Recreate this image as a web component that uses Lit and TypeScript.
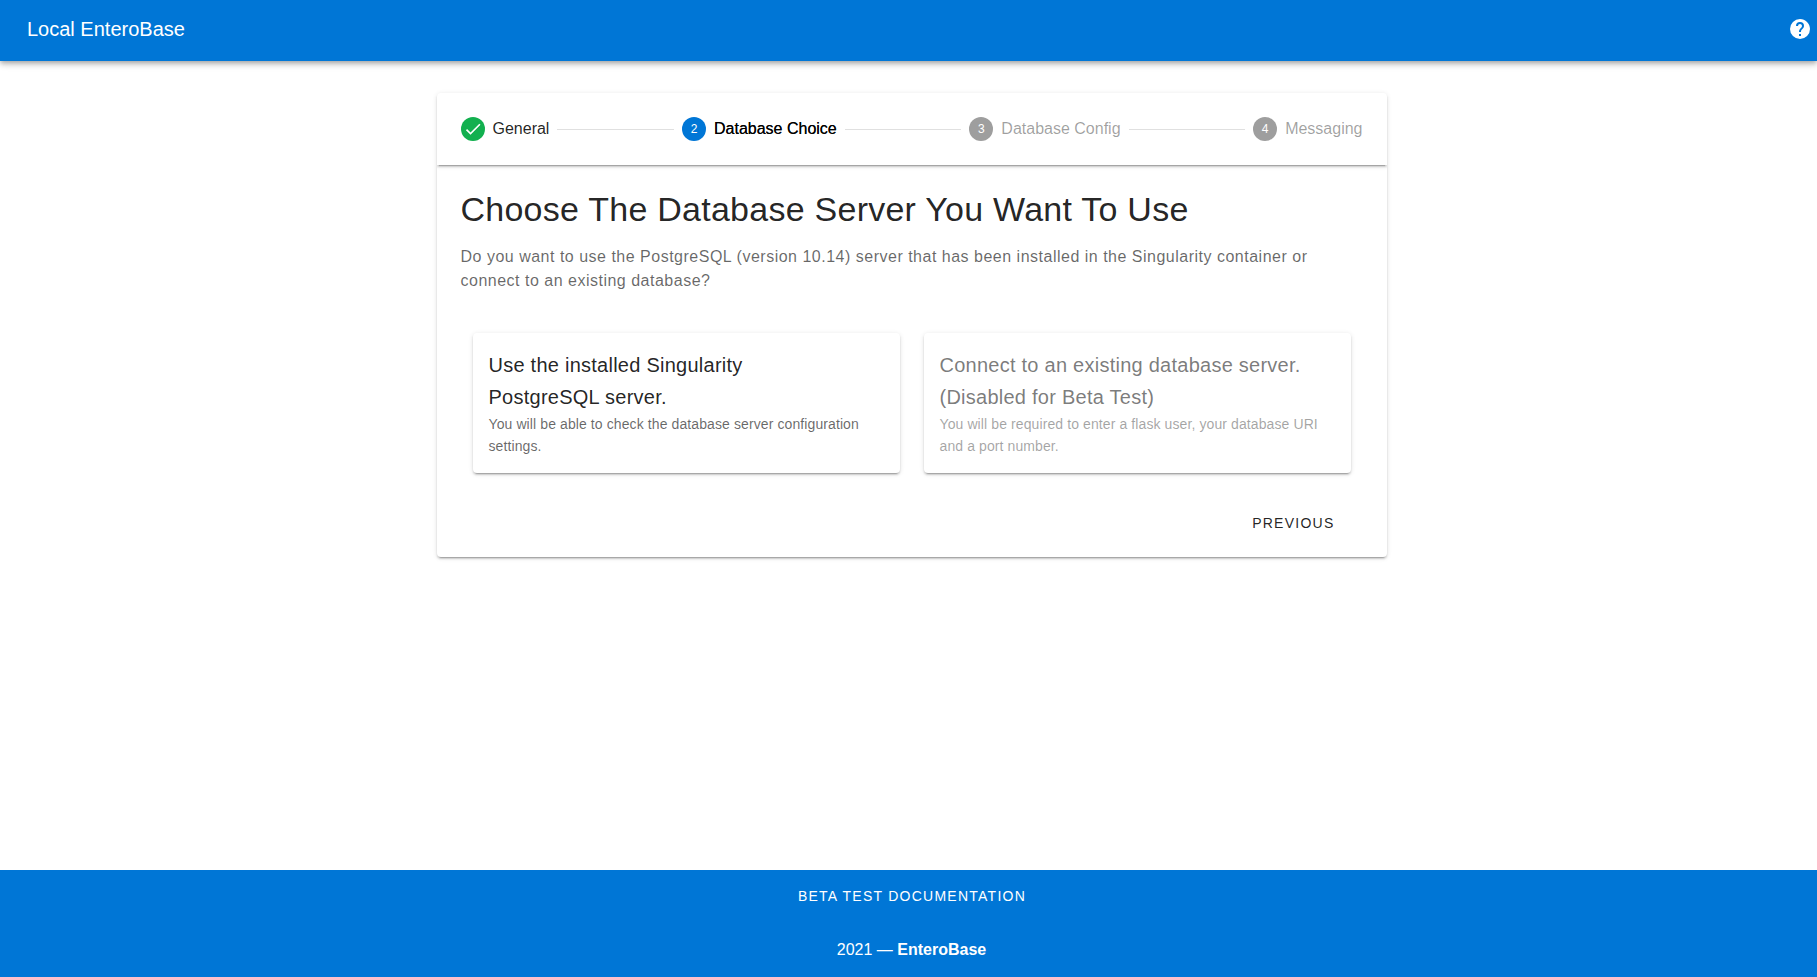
import { LitElement, html, css, svg, nothing } from "lit";
import { customElement } from "lit/decorators.js";
import { classMap } from "lit/directives/class-map.js";

const CHECK = "M21,7L9,19L3.5,13.5L4.91,12.09L9,16.17L19.59,5.59L21,7Z";
const HELP =
  "M15.07,11.25L14.17,12.17C13.45,12.89 13,13.5 13,15H11V14.5C11,13.39 11.45,12.39 12.17,11.67L13.41,10.41C13.78,10.05 14,9.55 14,9C14,7.89 13.1,7 12,7A2,2 0 0,0 10,9H8A4,4 0 0,1 12,5A4,4 0 0,1 16,9C16,9.88 15.64,10.67 15.07,11.25M13,19H11V17H13M12,2A10,10 0 0,0 2,12A10,10 0 0,0 12,22A10,10 0 0,0 22,12C22,6.47 17.5,2 12,2Z";

const STEPS = [
  { label: "General", state: "done" },
  { label: "Database Choice", state: "active" },
  { label: "Database Config", state: "todo" },
  { label: "Messaging", state: "todo" },
];

@customElement("app-root")
export class AppRoot extends LitElement {
  static styles = css`
    :host {
      display: flex;
      flex-direction: column;
      height: 100vh;
      overflow: hidden;
      background: #fff;
      color: rgba(0, 0, 0, 0.87);
      font-family: "Liberation Sans", Arial, sans-serif;
      font-size: 16px;
      line-height: 24px;
    }
    * {
      box-sizing: border-box;
    }
    .bar {
      flex: none;
      height: 61px;
      padding: 0 5px 3px 27px;
      display: flex;
      align-items: center;
      justify-content: space-between;
      background: #0076d6;
      color: #fff;
      box-shadow: 0 2px 4px -1px rgba(0, 0, 0, 0.2), 0 4px 5px 0 rgba(0, 0, 0, 0.14),
        0 1px 10px 0 rgba(0, 0, 0, 0.12);
    }
    .brand {
      font-size: 20px;
      line-height: 30px;
    }
    .help {
      width: 24px;
      height: 24px;
      fill: currentColor;
    }
    main {
      flex: 1;
      padding: 32px 0 0 6px;
    }
    .stepper,
    .choice {
      border-radius: 4px;
      background: #fff;
    }
    .stepper,
    .choice,
    .steps {
      box-shadow: 0 3px 1px -2px rgba(0, 0, 0, 0.2), 0 2px 2px 0 rgba(0, 0, 0, 0.14),
        0 1px 5px 0 rgba(0, 0, 0, 0.12);
    }
    .stepper {
      width: 950px;
      margin: 0 auto;
      overflow: hidden;
    }
    .steps {
      display: flex;
      align-items: center;
      height: 72px;
    }
    .step {
      display: flex;
      align-items: center;
      padding: 24px;
      line-height: 16px;
      color: rgba(0, 0, 0, 0.38);
    }
    .done {
      color: rgba(0, 0, 0, 0.87);
    }
    .active {
      color: rgba(0, 0, 0, 0.87);
      text-shadow: 0 0 0 #000;
    }
    .dot {
      width: 24px;
      height: 24px;
      margin-right: 8px;
      border-radius: 50%;
      display: flex;
      align-items: center;
      justify-content: center;
      font-size: 12px;
      color: #fff;
      background: #9e9e9e;
      text-shadow: none;
    }
    .done .dot {
      background: #12b04f;
    }
    .active .dot {
      background: #0076d6;
    }
    .tick {
      width: 20px;
      height: 20px;
      fill: currentColor;
    }
    .rule {
      flex: 1;
      height: 1px;
      margin: 1px -16px 0;
      background: rgba(0, 0, 0, 0.12);
    }
    .body {
      padding: 24px 24px 16px;
    }
    h1 {
      margin: 0 0 16px;
      font-size: 34px;
      font-weight: 400;
      line-height: 40px;
      letter-spacing: 0.0073529412em;
    }
    .lead {
      margin: 0;
      letter-spacing: 0.03125em;
      color: rgba(0, 0, 0, 0.6);
    }
    .choices {
      display: grid;
      grid-template-columns: 1fr 1fr;
      gap: 24px;
      padding: 40px 12px 32px;
    }
    .choice {
      padding: 16px;
    }
    h2 {
      margin: 0;
      font-size: 20px;
      font-weight: 400;
      line-height: 32px;
      letter-spacing: 0.0125em;
    }
    .note {
      margin: 0;
      font-size: 14px;
      line-height: 22px;
      letter-spacing: 0.0071428571em;
      color: rgba(0, 0, 0, 0.6);
    }
    .disabled > * {
      opacity: 0.6;
    }
    .actions {
      display: flex;
      justify-content: flex-end;
      padding-right: 12px;
    }
    .btn {
      height: 36px;
      padding: 0 16px;
      border: 0;
      background: none;
      color: inherit;
      font: 14px/36px "Liberation Sans", Arial, sans-serif;
      letter-spacing: 0.0892857143em;
      text-transform: uppercase;
    }
    footer {
      flex: none;
      height: 107px;
      padding: 8px 0 15px 6px;
      display: flex;
      flex-direction: column;
      align-items: center;
      justify-content: space-between;
      background: #0076d6;
      color: #fff;
    }
    footer .btn {
      margin-left: 1px;
    }
  `;

  render() {
    return html`
      <header class="bar">
        <span class="brand">Local EnteroBase</span>
        <svg class="help" viewBox="0 0 24 24">${svg`<path d=${HELP} />`}</svg>
      </header>
      <main>
        <section class="stepper">
          <div class="steps">
            ${STEPS.map(
              (s, i) => html`
                ${i ? html`<div class="rule"></div>` : nothing}
                <div class=${classMap({ step: true, [s.state]: true })}>
                  <span class="dot"
                    >${s.state === "done"
                      ? html`<svg class="tick" viewBox="0 0 24 24"><path d=${CHECK} /></svg>`
                      : i + 1}</span
                  >
                  <span>${s.label}</span>
                </div>
              `
            )}
          </div>
          <div class="body">
            <h1>Choose The Database Server You Want To Use</h1>
            <p class="lead">
              Do you want to use the PostgreSQL (version 10.14) server that has been installed in the
              Singularity container or connect to an existing database?
            </p>
            <div class="choices">
              <article class="choice">
                <h2>Use the installed Singularity<br />PostgreSQL server.</h2>
                <p class="note">
                  You will be able to check the database server configuration settings.
                </p>
              </article>
              <article class="choice disabled">
                <h2>Connect to an existing database server.<br />(Disabled for Beta Test)</h2>
                <p class="note">
                  You will be required to enter a flask user, your database URI and a port number.
                </p>
              </article>
            </div>
            <div class="actions"><button class="btn">Previous</button></div>
          </div>
        </section>
      </main>
      <footer>
        <button class="btn">Beta Test Documentation</button>
        <div>2021 — <strong>EnteroBase</strong></div>
      </footer>
    `;
  }
}
